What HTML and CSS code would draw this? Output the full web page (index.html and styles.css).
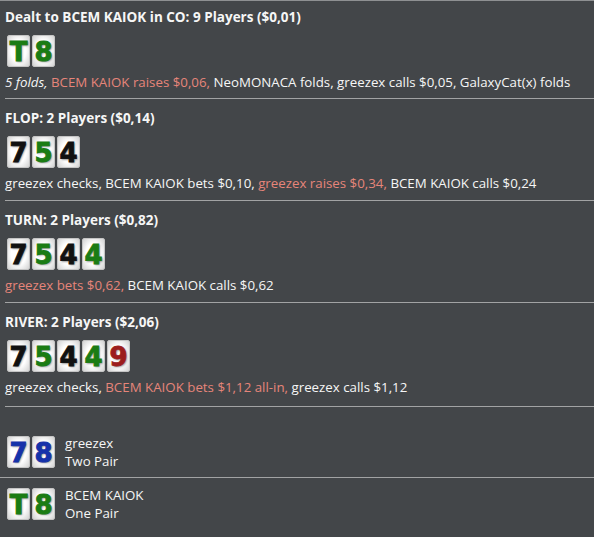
FILE: index.html
```html
<!DOCTYPE html>
<html lang="en">
<head>
    <meta charset="UTF-8">
    <title>Hand History</title>
    <link rel="stylesheet" href="styles.css">
</head>
<body>

<div class="hand">
    <div class="street first">
        <h2>Dealt to BCEM KAIOK in CO: 9 Players ($0,01)</h2>
        <div class="cards">
            <span class="card green">T</span>
            <span class="card green">8</span>
        </div>
        <p class="actions"><i>5 folds,</i> <span class="hero">BCEM KAIOK raises $0,06,</span> NeoMONACA folds, greezex calls $0,05, GalaxyCat(x) folds</p>
    </div>

    <div class="street">
        <h2>FLOP: 2 Players ($0,14)</h2>
        <div class="cards">
            <span class="card black">7</span>
            <span class="card green">5</span>
            <span class="card black">4</span>
        </div>
        <p class="actions">greezex checks, BCEM KAIOK bets $0,10, <span class="hero">greezex raises $0,34,</span> BCEM KAIOK calls $0,24</p>
    </div>

    <div class="street">
        <h2>TURN: 2 Players ($0,82)</h2>
        <div class="cards">
            <span class="card black">7</span>
            <span class="card green">5</span>
            <span class="card black">4</span>
            <span class="card green">4</span>
        </div>
        <p class="actions"><span class="hero">greezex bets $0,62,</span> BCEM KAIOK calls $0,62</p>
    </div>

    <div class="street last">
        <h2>RIVER: 2 Players ($2,06)</h2>
        <div class="cards">
            <span class="card black">7</span>
            <span class="card green">5</span>
            <span class="card black">4</span>
            <span class="card green">4</span>
            <span class="card red">9</span>
        </div>
        <p class="actions">greezex checks, <span class="hero">BCEM KAIOK bets $1,12 all-in,</span> greezex calls $1,12</p>
    </div>

    <div class="showdown">
        <div class="player">
            <div class="cards">
                <span class="card blue">7</span>
                <span class="card blue">8</span>
            </div>
            <div class="result">
                <div>greezex</div>
                <div>Two Pair</div>
            </div>
        </div>
        <div class="player">
            <div class="cards">
                <span class="card green">T</span>
                <span class="card green">8</span>
            </div>
            <div class="result">
                <div>BCEM KAIOK</div>
                <div>One Pair</div>
            </div>
        </div>
    </div>
</div>

</body>
</html>
```

FILE: styles.css
```css
body {
    margin: 0;
    padding: 0;
    background-color: #434649;
    color: #f6f6f6;
    font-family: 'Open Sans', sans-serif;
    font-size: 13.3px;
    line-height: 18px;
}
.hand {
    border-top: 1px solid #8e9092;
    height: 536px;
    overflow: hidden;
}
.street {
    margin-left: 5px;
    padding: 10px 0 8px 0;
    border-bottom: 1px solid #a2a3a4;
}
.street.first {
    padding-top: 7px;
    padding-bottom: 7px;
}
.street.last {
    padding-bottom: 10px;
}
.street h2 {
    margin: 0;
    font-size: 13.5px;
    font-weight: bold;
}
.cards {
    display: flex;
    gap: 2px;
    margin: 9px 0 6px 2px;
}
.card {
    width: 21px;
    height: 30px;
    border: 1px solid #c4c4c4;
    border-radius: 2px;
    background: radial-gradient(ellipse at center, #ffffff 50%, #d2d2d2 100%);
    font-family: 'DejaVu Sans', sans-serif;
    font-weight: bold;
    font-size: 26px;
    line-height: 32px;
    text-align: center;
    overflow: hidden;
    -webkit-text-stroke: 0.9px currentColor;
    text-shadow: 1px 1px 2px rgba(0, 0, 0, 0.45);
}
.card.black { color: #111111; }
.card.green { color: #1b7c14; }
.card.blue { color: #1632aa; }
.card.red { color: #9c1d1d; }
.actions {
    margin: 0;
}
.hero {
    color: #e6857a;
}
.showdown {
    padding-top: 19px;
}
.player {
    display: flex;
    align-items: center;
    gap: 10px;
    padding: 8px 0 7px 5px;
}
.player + .player {
    border-top: 1px solid #a2a3a4;
}
.player .cards {
    margin: 0 0 0 2px;
}
.result {
    line-height: 18px;
}
```
